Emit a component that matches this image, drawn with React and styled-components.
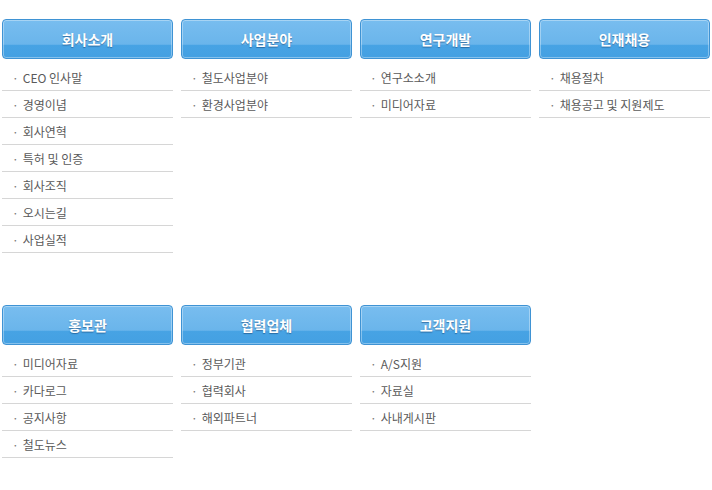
import React from 'react';
import styled, { createGlobalStyle } from 'styled-components';

const GlobalStyle = createGlobalStyle`
  html, body {
    margin: 0;
    padding: 0;
    background: #ffffff;
  }
  body {
    font-family: "Noto Sans CJK KR", "Noto Sans", sans-serif;
  }
`;

const Page = styled.div`
  width: 712px;
  height: 490px;
  padding: 19px 2px 0 2px;
  box-sizing: border-box;
  display: flex;
  flex-direction: column;
`;

const Section = styled.div`
  display: grid;
  grid-template-columns: repeat(4, 171px);
  column-gap: 8px;
  height: ${(p) => p.$height}px;
  align-items: start;
`;

const Column = styled.div`
  display: flex;
  flex-direction: column;
`;

const Header = styled.div`
  height: 40px;
  box-sizing: border-box;
  border: 1px solid #3f93d4;
  border-radius: 4px;
  background: linear-gradient(to bottom, #78bdef 0%, #6ab5eb 64%, #47a3e4 66%, #44a0e2 100%);
  box-shadow: inset 0 0 0 1px rgba(255, 255, 255, 0.35);
  display: flex;
  align-items: center;
  justify-content: center;
  color: #ffffff;
  font-size: 14px;
  font-weight: 700;
  text-shadow: 0 1px 1px rgba(20, 70, 120, 0.6);
`;

const List = styled.ul`
  list-style: none;
  margin: 5px 0 0 0;
  padding: 0;
`;

const Item = styled.li`
  height: 26px;
  border-bottom: 1px solid #d6d6d6;
  display: flex;
  align-items: center;
  padding-left: 10px;
  font-size: 12px;
  color: #5a5a5a;

  &::before {
    content: '·';
    margin-right: 4px;
    color: #777;
  }
`;

const sections = [
  {
    height: 286,
    columns: [
      { title: '회사소개', items: ['CEO 인사말', '경영이념', '회사연혁', '특허 및 인증', '회사조직', '오시는길', '사업실적'] },
      { title: '사업분야', items: ['철도사업분야', '환경사업분야'] },
      { title: '연구개발', items: ['연구소소개', '미디어자료'] },
      { title: '인재채용', items: ['채용절차', '채용공고 및 지원제도'] },
    ],
  },
  {
    height: 180,
    columns: [
      { title: '홍보관', items: ['미디어자료', '카다로그', '공지사항', '철도뉴스'] },
      { title: '협력업체', items: ['정부기관', '협력회사', '해외파트너'] },
      { title: '고객지원', items: ['A/S지원', '자료실', '사내게시판'] },
    ],
  },
];

export default function App() {
  return (
    <>
      <GlobalStyle />
      <Page>
        {sections.map((section, i) => (
          <Section key={i} $height={section.height}>
            {section.columns.map((col) => (
              <Column key={col.title}>
                <Header>{col.title}</Header>
                <List>
                  {col.items.map((item) => (
                    <Item key={item}>{item}</Item>
                  ))}
                </List>
              </Column>
            ))}
          </Section>
        ))}
      </Page>
    </>
  );
}
